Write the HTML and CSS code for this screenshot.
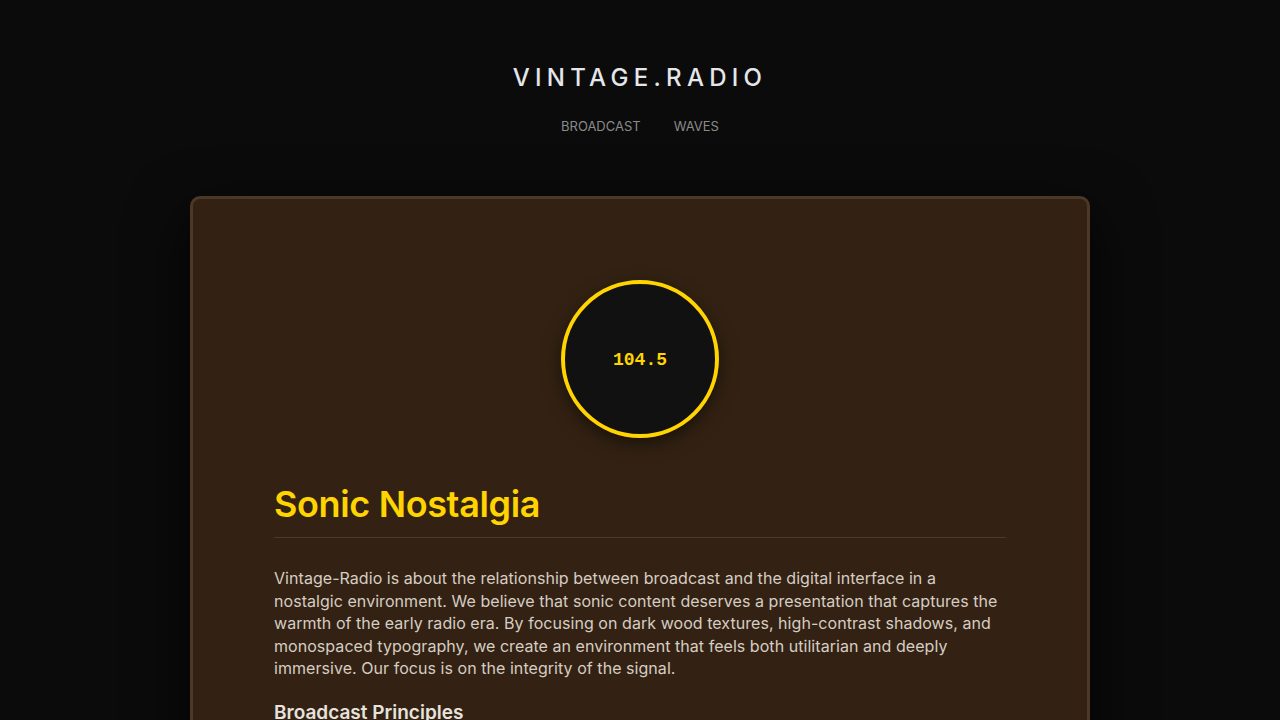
FILE: index.html
```html
<!DOCTYPE html>
<html lang="en">
<head>
<meta charset="utf-8">
<title>Vintage Radio</title>
<link rel="stylesheet" href="styles.css">
</head>
<body>
<header class="site-header">
  <div class="logo">VINTAGE.RADIO</div>
  <nav class="nav">
    <a href="#">BROADCAST</a>
    <a href="#">WAVES</a>
  </nav>
</header>
<main class="cabinet">
  <div class="dial-wrap">
    <div class="dial">104.5</div>
  </div>
  <h1 class="title">Sonic Nostalgia</h1>
  <p class="lead">Vintage-Radio is about the relationship between broadcast and the digital interface in a nostalgic environment. We believe that sonic content deserves a presentation that captures the warmth of the early radio era. By focusing on dark wood textures, high-contrast shadows, and monospaced typography, we create an environment that feels both utilitarian and deeply immersive. Our focus is on the integrity of the signal.</p>
  <h2 class="subtitle">Broadcast Principles</h2>
  <p class="lead">Every transmission is treated with care, from the first crackle of static to the final fade of the carrier wave.</p>
</main>
</body>
</html>
```

FILE: styles.css
```css
* { box-sizing: border-box; }
html, body { margin: 0; padding: 0; }
body {
  background: #0b0b0b;
  font-family: Inter, "Open Sans", sans-serif;
  color: #d6cdc3;
}
.site-header {
  display: flex;
  flex-direction: column;
  align-items: center;
  padding-top: 63px;
}
.logo {
  font-size: 24px;
  font-weight: 500;
  letter-spacing: 0.22em;
  color: #e4e6ea;
  line-height: 30px;
}
.nav {
  display: flex;
  gap: 33px;
  margin-top: 23px;
}
.nav a {
  font-size: 13px;
  color: #8a8a8a;
  text-decoration: none;
  line-height: 20px;
}
.cabinet {
  width: 900px;
  margin: 60px auto 0;
  background: #332213;
  border: 3px solid #4b3826;
  border-radius: 10px;
  padding: 81px 81px 80px;
  box-shadow: 0 20px 60px rgba(0,0,0,0.8);
}
.dial-wrap {
  display: flex;
  justify-content: center;
}
.dial {
  width: 158px;
  height: 158px;
  border-radius: 50%;
  border: 4px solid #ffd400;
  background: #111111;
  display: flex;
  align-items: center;
  justify-content: center;
  padding-top: 2px;
  font-family: "Liberation Mono", monospace;
  font-weight: bold;
  font-size: 18px;
  color: #ffd400;
  box-shadow: 0 6px 18px rgba(0,0,0,0.5);
}
.title {
  margin: 43px 0 0;
  font-size: 36px;
  font-weight: 600;
  color: #ffd400;
  line-height: 46px;
  padding-bottom: 10px;
  border-bottom: 1px solid #4b3a29;
  letter-spacing: -0.01em;
}
.lead {
  margin: 29px 0 0;
  font-size: 16px;
  line-height: 22.6px;
  color: #d6cdc3;
  letter-spacing: 0.05px;
}
.subtitle {
  margin: 20px 0 0;
  font-size: 19px;
  font-weight: 600;
  color: #e6e2dd;
  line-height: 26px;
}
```
